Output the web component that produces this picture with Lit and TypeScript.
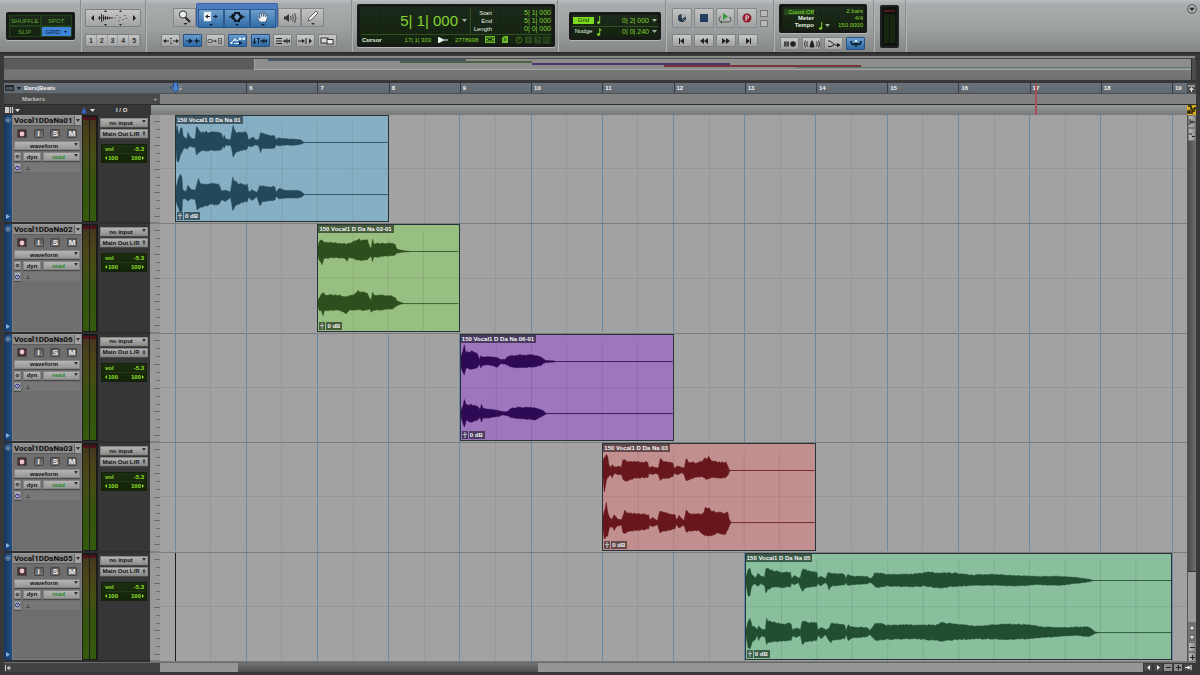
import { LitElement, html, svg, css, nothing } from "lit";
import { customElement, property } from "lit/decorators.js";
import { styleMap } from "lit/directives/style-map.js";

const FIRST_BAR = 5;
const VISIBLE_BARS = 14.21;
const pct = (bar: number) => `${((bar - FIRST_BAR) / VISIBLE_BARS) * 100}%`;

interface Clip {
  name: string;
  start: number;
  bars: number;
  fill: string;
  wave: string;
  tag: string;
  mini: string;
  channels: string[];
}

interface Track {
  name: string;
  clip: Clip;
}

// Envelopes are "x,up,down" triples; one bar is 213.6 units wide.
const TRACKS: Track[] = [
  {
    name: "Vocal1DDaNa01",
    clip: {
      name: "150 Vocal1 D Da Na 01", start: 5, bars: 3, fill: "#86afc3", wave: "#24485b", tag: "#3f5966", mini: "#45596b",
      channels: [
        "0,40,20 3,50,50 7,30,55 10,24,50 14,40,35 18,42,30 22,18,20 30,12,15 33,10,20 36,28,18 40,20,12 48,12,12 58,10,15 62,45,38 65,48,36 70,35,28 78,30,25 100,30,24 130,30,22 138,25,20 142,10,10 146,20,16 150,10,8 165,8,8 168,25,15 173,48,40 180,30,30 200,30,22 215,28,20 219,8,10 225,12,12 235,15,10 240,8,6 250,8,10 256,28,28 260,26,18 280,22,18 300,18,16 302,8,6 310,14,10 325,12,8 350,10,8 375,8,6 384,4,3 387,0,0",
        "0,20,20 8,50,40 13,55,55 18,50,50 20,15,15 30,8,12 36,25,20 45,15,12 58,12,15 64,35,45 68,48,42 75,30,40 100,32,30 130,30,28 138,10,15 150,12,20 165,8,8 172,48,48 180,36,30 210,28,22 216,28,20 220,8,8 230,14,18 245,6,6 254,25,35 260,24,22 300,22,16 303,6,5 312,18,12 330,12,10 370,12,10 380,8,7 386,3,3 390,0,0",
      ],
    },
  },
  {
    name: "Vocal1DDaNa02",
    clip: {
      name: "150 Vocal1 D Da Na 02-01", start: 7, bars: 2, fill: "#98bf82", wave: "#2d4f1d", tag: "#475c3d", mini: "#4c6440",
      channels: [
        "0,15,15 4,30,25 8,35,30 12,35,40 18,27,20 40,26,18 80,24,20 88,22,28 95,24,18 108,28,20 118,34,24 125,37,24 130,32,25 150,32,24 158,14,16 162,10,14 166,35,28 170,24,16 180,24,16 225,24,12 235,20,10 238,10,5 245,6,4 255,3,2 272,1,1 280,0,0",
        "0,8,8 4,18,20 10,26,20 16,30,36 20,26,20 60,24,20 86,20,28 95,22,20 110,28,18 122,36,18 140,35,20 150,28,18 158,14,16 162,12,25 166,32,20 174,24,20 225,22,16 236,18,10 240,8,6 250,4,2 262,0,0",
      ],
    },
  },
  {
    name: "Vocal1DDaNa06",
    clip: {
      name: "150 Vocal1 D Da Na 06-01", start: 9, bars: 3, fill: "#9d76bd", wave: "#2e0a54", tag: "#4c3b60", mini: "#4b3470",
      channels: [
        "0,15,15 6,30,30 10,45,40 14,28,22 20,28,20 35,30,22 50,22,18 56,6,8 60,18,20 64,14,12 80,14,10 110,12,16 120,6,6 135,6,8 140,14,10 150,16,16 180,19,18 220,18,16 240,14,12 250,8,6 256,3,3 280,2,2 285,0,0",
        "0,10,10 6,22,26 10,38,40 16,24,20 30,26,24 50,22,20 58,12,12 62,26,26 66,16,14 90,12,12 115,8,8 125,5,4 140,6,6 152,16,12 175,18,14 200,18,16 225,16,18 240,12,10 250,8,6 256,2,2 260,0,0",
      ],
    },
  },
  {
    name: "Vocal1DDaNa03",
    clip: {
      name: "150 Vocal1 D Da Na 03", start: 11, bars: 3, fill: "#c18f8f", wave: "#67161b", tag: "#664a4b", mini: "#78353a",
      channels: [
        "0,30,20 4,40,60 10,44,30 14,40,20 18,15,18 24,10,12 28,18,22 34,10,8 45,12,12 56,10,12 60,34,26 66,32,32 74,26,30 100,26,22 136,24,20 139,8,8 150,12,12 160,8,8 168,8,12 174,36,30 180,28,24 200,24,22 212,20,18 216,6,8 225,14,12 240,8,6 246,8,14 252,34,30 258,26,28 280,22,20 300,26,18 306,36,22 312,34,25 320,40,24 328,28,20 350,24,22 372,24,20 378,12,14 384,0,0",
        "0,20,20 4,34,46 10,55,40 14,30,40 20,14,14 28,10,12 34,24,22 44,10,10 56,8,8 60,20,30 66,36,34 74,28,26 100,26,24 138,22,18 141,8,8 150,14,12 165,6,6 172,32,30 178,30,28 210,24,20 218,22,18 222,8,6 230,20,16 245,6,8 252,36,28 260,26,24 290,26,24 304,26,34 310,46,40 320,40,38 335,32,36 345,30,30 372,28,34 378,28,20 382,10,10 388,0,0",
      ],
    },
  },
  {
    name: "Vocal1DDaNa05",
    clip: {
      name: "150 Vocal1 D Da Na 05", start: 13, bars: 6, fill: "#89bf9d", wave: "#214d31", tag: "#3b5c48", mini: "#56806a",
      channels: [
        "0,10,10 6,30,40 12,38,46 16,18,20 22,14,12 28,8,10 36,20,18 45,12,8 56,10,16 60,38,38 66,36,26 80,28,20 110,24,20 134,24,18 137,6,8 146,14,12 158,8,6 164,10,20 170,34,32 176,32,22 200,26,18 214,24,16 216,6,8 224,12,16 240,6,6 246,20,14 250,24,28 256,20,16 290,20,14 298,16,12 301,5,5 306,18,14 320,12,12 350,12,10 366,12,10 372,6,6 380,8,8 388,22,18 400,22,20 420,18,16 500,18,18 540,24,16 580,22,22 620,22,18 680,16,14 760,18,14 820,14,16 880,12,12 950,12,14 980,10,10 1020,6,6 1038,3,3 1046,0,0",
        "0,8,8 6,30,40 12,44,48 18,20,30 28,16,20 34,8,8 38,20,22 48,10,8 58,8,16 62,40,36 68,34,28 90,28,26 136,26,22 140,8,10 152,14,14 164,8,8 170,36,36 178,30,28 213,28,22 217,8,8 226,16,18 240,8,6 250,12,24 256,26,28 262,28,22 298,22,18 301,5,5 308,22,22 320,16,16 366,14,12 372,6,6 380,14,12 388,26,22 400,28,22 420,22,20 500,22,18 570,22,22 590,28,24 640,24,20 700,18,18 780,26,20 860,22,18 900,16,14 960,14,10 1000,16,8 1030,16,12 1042,10,8 1050,3,3 1062,0,0",
      ],
    },
  },
];

// Small deterministic ripple so that the envelopes look like audio.
const ripple = (n: number) => {
  const v = Math.sin(n * 12.9898) * 43758.5453;
  return 0.95 + (v - Math.floor(v)) * 0.18;
};

function wavePath(env: string, mid: number): string {
  const pts = env.split(" ").map((p) => p.split(",").map(Number));
  const top: string[] = [];
  const low: string[] = [];
  for (let i = 0; i < pts.length - 1; i++) {
    const [x0, u0, d0] = pts[i];
    const [x1, u1, d1] = pts[i + 1];
    const steps = Math.max(1, Math.round((x1 - x0) / 4));
    for (let s = 0; s < steps; s++) {
      const t = s / steps;
      const x = x0 + (x1 - x0) * t;
      top.push(`${x.toFixed(1)} ${(mid - (u0 + (u1 - u0) * t) * ripple(x)).toFixed(1)}`);
      low.unshift(`${x.toFixed(1)} ${(mid + (d0 + (d1 - d0) * t) * ripple(x + 7)).toFixed(1)}`);
    }
  }
  const end = pts[pts.length - 1][0];
  return `M${top.join("L")}L${end} ${mid}L${low.join("L")}Z`;
}

const controls = css`
  * { box-sizing: border-box; }
  button, select {
    appearance: none;
    margin: 0;
    padding: 0;
    border: 0;
    border-radius: 0;
    font: inherit;
    color: inherit;
    background: none;
    line-height: 1;
  }
  svg { display: block; }
`;

@customElement("audio-clip")
class AudioClip extends LitElement {
  @property({ attribute: false }) clip!: Clip;

  static styles = [controls, css`
    :host { display: block; font: bold 6px/8px "Liberation Sans", Arial, sans-serif; color: #f4f4f4; }
    .box { position: relative; height: 100%; border: 1px solid #26343a; display: flex; flex-direction: column; justify-content: space-between; align-items: flex-start; }
    .wave { position: absolute; inset: 0; width: 100%; height: 100%; }
    .title, .gain span { position: relative; padding: 0 2px 0 1px; white-space: nowrap; }
    .gain { position: relative; display: flex; gap: 1px; padding: 0 0 1px 1px; }
    .gain .fader { padding: 1px; }
  `];

  render() {
    const c = this.clip;
    const w = c.bars * 213.6;
    const lines = Array.from({ length: c.bars * 2 - 1 }, (_, i) => (i + 1) * 106.8);
    const tag = styleMap({ background: c.tag });
    return html`
      <div class="box" style=${styleMap({ background: c.fill })}>
        <svg class="wave" viewBox="0 0 ${w} 322" preserveAspectRatio="none" aria-hidden="true">
          ${lines.map((x) => svg`<path d="M${x} 20V322" stroke="#000" stroke-opacity=".09" stroke-width="3"/>`)}
          <path d="M0 161H${w}" stroke="#000" stroke-opacity=".08" stroke-width="3" />
          ${[81, 240].map((mid, i) => svg`
            <path d="M0 ${mid}H${w}" stroke=${c.wave} stroke-width="3" stroke-opacity=".85"/>
            <path d=${wavePath(c.channels[i], mid)} fill=${c.wave} stroke=${c.wave} stroke-width="1.500"/>`)}
        </svg>
        <span class="title" style=${tag}>${c.name}</span>
        <div class="gain">
          <span class="fader" style=${tag}><svg width="4" height="6" viewBox="0 0 4 6"><path d="M2 0V6M0 2.5H4" stroke="#b8c0c0" stroke-width="1" fill="none" /></svg></span>
          <span style=${tag}>0 dB</span>
        </div>
      </div>`;
  }
}

@customElement("track-head")
class TrackHead extends LitElement {
  @property() name = "";

  static styles = [controls, css`
    :host { display: grid; grid-template-columns: 8px 70px 16px 52px; font: bold 6px/8px "Liberation Sans", Arial, sans-serif; color: #111; background: #2e2e2e; padding-bottom: 2px; }
    .color { background: linear-gradient(90deg, #16365e, #214d84); display: flex; flex-direction: column; justify-content: space-between; align-items: center; padding: 2px 0 3px; }
    .strip { background: #6e6e6e; border: 1px solid #7c7c7c; border-top-color: #999; display: flex; flex-direction: column; gap: 2px; }
    .title { display: flex; height: 10px; background: #8c8c8c; color: #0c0c0c; border-bottom: 1px solid #5c5c5c; }
    .title button:first-child { flex: 1; text-align: left; padding-left: 1px; font: bold 8px/9px Roboto, sans-serif; }
    .title button:last-child { width: 7px; border-left: 1px solid #666; display: flex; justify-content: center; padding-top: 3px; background: #a0a0a0; }
    .keys { display: flex; justify-content: space-between; padding: 1px 4px 1px; }
    .keys button { width: 10px; height: 9px; background: linear-gradient(#5a5a5a, #757575); border: 1px solid #484848; color: #eee; font-size: 8px; line-height: 7px; border-radius: 1px; display: flex; justify-content: center; align-items: center; }
    .keys .rec { background: #4a3033; }
    .row { display: flex; gap: 2px; padding: 0 1px; height: 9px; }
    .pill { background: linear-gradient(#b5b5b5, #979797); border: 1px solid #858585; box-shadow: 0 1px 0 #4a4a4a; display: flex; align-items: center; justify-content: center; }
    .drop { position: relative; flex: 1; display: flex; height: 9px; }
    .drop select { flex: 1; min-width: 0; text-align: center; text-align-last: center; padding-right: 6px; background: linear-gradient(#b5b5b5, #979797); border: 1px solid #858585; box-shadow: 0 1px 0 #4a4a4a; }
    .drop svg { position: absolute; right: 2px; top: 2px; pointer-events: none; }
    .read select { color: #228a2c; }
    .small { width: 7px; }
    .dyn { width: 18px; }
    .slot { flex: 1; background: #787878; border: 1px solid #747474; padding: 2px 2px; }
    .meter { background: #1b1b1b; display: flex; gap: 1px; padding: 2px 2px 1px 1px; }
    .bar { flex: 1; border-top: 3px solid #4e1218; background: linear-gradient(#45371f, #4b4418 18%, #454f14 40%, #36540e 60%, #345a0c); }
    .io { background: #363636; padding: 3px 2px 0 2px; display: flex; flex-direction: column; gap: 2px; }
    .io .drop { flex: none; }
    .io .drop select { background: linear-gradient(#b4b4b4, #8e8e8e); }
    .vol { margin: 4px 1px 0; background: linear-gradient(#1c2c10, #142409); border: 1px solid #17200f; color: #8fe028; line-height: 8px; padding: 0 2px 0 3px; }
    .vol div { display: flex; justify-content: space-between; }
    .vol .pan { border-top: 1px solid #253818; }
    .vol .pan span { display: flex; align-items: center; gap: 1px; }
  `];

  private drop(label: string, value: string, cls = "", glyph: unknown = svg`<path d="M0 0H4L2 3Z" fill="#333"/>`) {
    return html`<label class="drop ${cls}"><select aria-label=${label}><option>${value}</option></select>
      <svg width="4" height="5" viewBox="0 0 4 5">${glyph}</svg></label>`;
  }

  render() {
    return html`
      <div class="color">
        <svg width="6" height="6" viewBox="0 0 6 6"><circle cx="3" cy="3" r="2.5" fill="#31567f" stroke="#6f8bad" stroke-width=".7" /><path d="M1.6 2.4H4.4L3 4.4Z" fill="#a8bbd2" /></svg>
        <svg width="4" height="5" viewBox="0 0 4 5"><path d="M0 0L4 2.5L0 5Z" fill="#7db0e6" /></svg>
      </div>
      <div class="strip">
        <div class="title">
          <button>${this.name}</button>
          <button aria-label="Track options"><svg width="4" height="3" viewBox="0 0 4 3"><path d="M0 0H4L2 3Z" fill="#333" /></svg></button>
        </div>
        <div class="keys">
          <button class="rec" aria-label="Record enable"><svg width="6" height="6" viewBox="0 0 6 6"><circle cx="3" cy="3" r="2.4" fill="#e9c9cb" /></svg></button>
          <button>I</button><button>S</button><button>M</button>
        </div>
        <div class="row">${this.drop("Track view", "waveform")}</div>
        <div class="row">
          <button class="pill small" aria-label="Freeze"><svg width="5" height="5" viewBox="0 0 5 5"><circle cx="2.5" cy="2.5" r="1.8" fill="#333" /><path d="M2.5 0V5M0 2.5H5" stroke="#777" stroke-width=".6" /></svg></button>
          <button class="pill dyn">dyn</button>
          ${this.drop("Automation mode", "read", "read")}
        </div>
        <div class="row">
          <button class="pill small" aria-label="Timebase"><svg width="6" height="6" viewBox="0 0 6 6"><circle cx="3" cy="3" r="2.3" fill="#dde" stroke="#1c1c78" stroke-width="1.2" /><path d="M3 1.6V3.2H4" stroke="#1c1c78" stroke-width=".8" fill="none" /></svg></button>
          <div class="slot"><svg width="4" height="4" viewBox="0 0 4 4"><path d="M2 0V3M0 3.5H4" stroke="#444" stroke-width=".9" /></svg></div>
        </div>
      </div>
      <div class="meter"><div class="bar"></div><div class="bar"></div></div>
      <div class="io">
        ${this.drop("Input", "no input")}
        ${this.drop("Output", "Main Out L/R", "", svg`<path d="M2 0V5M.5 1.2H3.5M.5 2.8H3.5" stroke="#333" stroke-width=".8"/>`)}
        <div class="vol">
          <div><span>vol</span><span>-5.3</span></div>
          <div class="pan">
            <span><svg width="2" height="4" viewBox="0 0 2 4"><path d="M2 0V4L0 2Z" fill="#8fe028" /></svg>100</span>
            <span>100<svg width="2" height="4" viewBox="0 0 2 4"><path d="M0 0V4L2 2Z" fill="#8fe028" /></svg></span>
          </div>
        </div>
      </div>`;
  }
}

const K = "#222";
const W = "#e8eef2";
const caret = (fill: string) => html`<svg class="caret" width="5" height="3" viewBox="0 0 5 3"><path d="M0 0H5L2.5 3Z" fill=${fill} /></svg>`;
const ico = (w: number, h: number, body: unknown) =>
  html`<svg width=${w} height=${h} viewBox="0 0 ${w} ${h}" fill="none" aria-hidden="true">${body}</svg>`;

const EDIT_TOOLS: [string, boolean, unknown][] = [
  ["Link timeline and edit selection", false, ico(16, 8, svg`<path d="M1 4H6M10 4H15" stroke="#222"/><path d="M0 4L3 2V6ZM16 4L13 2V6Z" fill="#222"/><circle cx="8" cy="1.500" r=".8" fill="#222"/><circle cx="8" cy="4" r=".6" fill="#222"/><circle cx="8" cy="6.500" r=".8" fill="#222"/>`)],
  ["Tab to transients", true, ico(16, 8, svg`<path d="M1 4H6M9 4H15M11.500 1.500V6.500" stroke="#0b1c30"/><path d="M4 1.500L8 4L4 6.500ZM13 2.500L11 4L13 5.500Z" fill="#0b1c30"/>`)],
  ["Mirrored MIDI editing", false, ico(16, 8, svg`<rect x="1" y="2.500" width="4" height="3" rx="1" stroke="#555"/><path d="M5 4H9" stroke="#444"/><path d="M8 2.500L10 4L8 5.500Z" fill="#444"/><path d="M11.500 1V7M14.500 1V7M11 1.500H15M11 4H15M11 6.500H15" stroke="#555" stroke-width=".8"/>`)],
  ["Automation follows edit", true, ico(16, 8, svg`<path d="M1 6L4 3L7 4L10 2L15 2M4 6.500H10" stroke="#dbe9f7"/><circle cx="1.500" cy="6" r="1.100" fill="#fff"/><circle cx="5" cy="2.500" r="1.100" fill="#fff"/><circle cx="10" cy="1.700" r="1.100" fill="#fff"/><circle cx="14" cy="1.700" r="1.100" fill="#fff"/><path d="M9 4L12.500 6L9 8Z" fill="#0b1c30"/>`)],
  ["Timeline insertion follows playback", true, ico(16, 8, svg`<path d="M2.500 1V6M6.500 1V7M8 4H15M12 1.500V6.500" stroke="#0b1c30"/><path d="M.5 4.500L2.500 7.500L4.500 4.500ZM5 1H8V2H5ZM10 2L12 4L10 6ZM15 2L13 4L15 6Z" fill="#0b1c30"/>`)],
  ["Edit selection", false, ico(16, 8, svg`<path d="M1 1.500H7M1 4H7M1 6.500H7M8 4H15M12 1.500V6.500" stroke="#222"/><path d="M9.500 2L11.500 4L9.500 6ZM15 2L13 4L15 6Z" fill="#222"/>`)],
  ["Insertion playback", false, ico(16, 8, svg`<path d="M1 4H6M9 1V7" stroke="#222"/><path d="M5 2L8 4L5 6ZM12 1.500L15 4L12 6.500Z" fill="#222"/>`)],
  ["Layered editing", false, ico(16, 8, svg`<rect x="2" y="1" width="7" height="5" fill="#ddd" stroke="#222" stroke-width=".9"/><rect x="8" y="2.500" width="6" height="4.500" fill="#f0f0f0" stroke="#222" stroke-width=".9"/>`)],
];

@customElement("app-root")
class AppRoot extends LitElement {
  static styles = [controls, css`
    :host { display: block; font: bold 6px/8px "Liberation Sans", Arial, sans-serif; color: #111; }
    .app { height: 100vh; min-height: 480px; display: flex; flex-direction: column; background: #383838; overflow: hidden; }

    .toolbar { flex: none; height: 54px; display: flex; background: linear-gradient(#bcc0c2, #a9acad 8%, #9fa2a3 50%, #858787); border-bottom: 2px solid #2d2d2d; }
    .group { display: flex; flex-direction: column; border-right: 1px solid #8a8d8e; box-shadow: 1px 0 0 #b0b3b4; }
    .modes-group { padding: 12px 5px 0 6px; width: 81px; }
    .zoom-group { padding: 9px 4px 0; width: 65px; gap: 7px; }
    .tools-group { padding: 3px 14px 0 15px; width: 206px; gap: 7px; }
    .counter-group { padding: 4px 2px 0 5px; width: 206px; }
    .grid-group { padding: 12px 4px 0 11px; width: 108px; }
    .transport-group { padding: 8px 5px 0 6px; width: 108px; gap: 6px; }
    .tempo-group { padding: 4px 6px 0 5px; width: 100px; gap: 4px; }
    .meter-group { padding: 5px 6px 0 6px; width: 32px; }
    .end { flex: 1; display: flex; justify-content: flex-end; padding: 4px 3px; }
    .end button { width: 10px; height: 10px; }

    .lcd { background: repeating-linear-gradient(90deg, #00000026 0 1px, transparent 1px 3px), linear-gradient(#1d2c1c, #152310); border: 3px solid #161916; border-radius: 2px; color: #84d42c; font-weight: normal; box-shadow: 0 1px 0 #b4b6b7; }
    .modes { display: grid; grid-template-columns: 1fr 1fr; height: 28px; }
    .modes button { color: #62a834; border: 1px solid #22401a; text-align: center; }
    .modes .on { background: #3f83d6; color: #0d2238; position: relative; display: flex; align-items: center; justify-content: center; gap: 4px; }

    .keyrow { display: flex; border: 1px solid #7d7f80; border-radius: 1px; background: linear-gradient(#c4c5c5, #a2a3a4); }
    .keyrow button { flex: 1; display: flex; align-items: center; justify-content: center; }
    .zooms { height: 18px; }
    .presets { height: 13px; }
    .presets button { border-right: 1px solid #999; font-size: 7px; color: #333; }

    .tools { display: flex; align-items: flex-end; height: 24px; padding-left: 12px; }
    .tool { width: 23px; height: 19px; display: flex; align-items: center; justify-content: center; border: 1px solid #85878a; background: linear-gradient(#c2c3c3, #a0a1a2); }
    .smart { display: flex; padding: 5px 1px 0; background: #4d7dc0; border: 1px solid #3c63a0; border-bottom: 0; border-radius: 2px 2px 0 0; height: 24px; }
    .smart .tool { width: 26px; height: 19px; border-color: #2d5a8e; background: linear-gradient(#6f9fce, #2f6ca6); }
    .edits { display: flex; justify-content: space-between; }
    .key { width: 19px; height: 13px; display: flex; align-items: center; justify-content: center; border: 1px solid #7f8183; border-radius: 1px; background: linear-gradient(#c8c9c9, #9fa1a1); }
    .blue { background: linear-gradient(#6a9ccc, #2d68a2); border-color: #285283; }

    .counter { height: 43px; display: flex; flex-direction: column; padding: 0 1px; }
    .counter .main { display: flex; height: 28px; border-bottom: 1px solid #31521f; }
    .big { flex: 1; display: flex; align-items: center; justify-content: flex-end; gap: 4px; font-size: 15px; border-right: 1px solid #31521f; padding-right: 3px; line-height: 20px; }
    .marks { width: 80px; display: flex; flex-direction: column; justify-content: center; font-size: 7px; }
    .marks div { display: flex; justify-content: space-between; height: 8px; }
    .marks b, .status b, .settings b { color: #e6efe2; font-weight: normal; font-size: 6px; }
    .marks b { width: 21px; text-align: right; }
    .status { flex: 1; display: flex; align-items: center; justify-content: space-between; padding-left: 1px; }
    .status b { font-weight: bold; margin-right: 16px; }
    .dim { opacity: .55; }

    .grids { height: 28px; display: flex; flex-direction: column; }
    .grids .line { flex: 1; display: flex; align-items: center; gap: 3px; border-bottom: 1px solid #31521f; padding: 0 1px; }
    .grids .line:last-child { border-bottom: 0; }
    .grids .name { width: 21px; height: 7px; line-height: 7px; text-align: center; color: #e6efe2; }
    .grids .lit { background: #7edc20; color: #10280a; }
    .grids select { flex: 1; text-align: right; text-align-last: right; font-size: 7px; height: 9px; min-width: 0; }

    .transport { display: flex; gap: 2px; }
    .transport .tool { width: 20px; height: 20px; border-radius: 1px; }
    .transport .key { width: 20px; }
    .stack { display: flex; flex-direction: column; justify-content: space-around; margin-left: 1px; }
    .stack button { width: 8px; height: 7px; border: 1px solid #777; background: #b6b7b7; }

    .settings { height: 29px; display: flex; flex-direction: column; justify-content: center; padding: 0 1px 0 2px; }
    .settings div { display: flex; align-items: center; height: 7px; line-height: 7px; }
    .settings div > :first-child { width: 30px; text-align: right; }
    .settings .off { background: #24481a; color: #8fe030; text-align: center; }
    .settings .value { margin-left: auto; }
    .settings b { font-weight: bold; }
    .tempo-group .edits { padding: 0 2px 0 1px; }
    .output { height: 43px; background: #0f130f; border: 2px solid #202220; border-radius: 2px; padding: 3px 2px; display: flex; flex-direction: column; gap: 2px; }
    .output i { height: 2px; background: #50161a; }
    .output em { flex: 1; background: linear-gradient(90deg, #16260f 45%, #0f130f 45% 55%, #16260f 55%); }

    .overview { flex: none; margin: 2px 4px 3px; display: flex; flex-direction: column; }
    .rail { height: 3px; background: #898989; border-bottom: 1px solid #4a4a4a; margin-right: 1px; }
    .universe { display: flex; height: 21px; background: linear-gradient(#7c7c7c, #727272); }
    .before { width: 250px; height: 11px; background: #5b5b5b; border-bottom: 1px solid #6b6b6b; }
    .window { position: relative; flex: 1; height: 11px; background: #8d8d8d; border: solid #a4a4a4; border-width: 0 0 1px 1px; }
    .mini { position: absolute; height: 2px; }
    .mini:last-child { height: 1px; }
    .grip { width: 5px; background: #4b4b4b; border-left: 1px solid #2c2c2c; }

    .cols { display: grid; grid-template-columns: 156px 15px 1fr 9px; }
    .rulers { flex: none; position: relative; margin: 0 4px; }
    .ruler { height: 11px; background: linear-gradient(#69727a, #606870); color: #f3f3f3; border-bottom: 1px solid #4c5155; }
    .ruler .label, .markers .label, .lists .label { display: flex; align-items: center; gap: 3px; }
    .ruler .label { padding-left: 1px; }
    .scale { position: relative; grid-column: 3; }
    .tick { position: absolute; top: 0; bottom: 0; padding-left: 2px; border-left: 1px solid #363c42; line-height: 10px; }
    .tail { background: #4a4a4a; display: flex; justify-content: center; align-items: center; }
    .markers { height: 10px; background: #828282; }
    .markers .label { background: #4a4a4a; color: #bdbdbd; padding: 0 3px 0 18px; justify-content: space-between; }
    .lists { height: 11px; border-top: 1px solid #2c2c2c; color: #e0e0e0; }
    .lists .label { background: #363636; padding-left: 1px; gap: 1px; margin-right: 9px; }
    .lists .io { margin-left: 20px; }
    .lists .fill { margin-left: -9px; grid-column: 2 / 4; background: linear-gradient(#969a98, #777a78); }
    .lists .label .metro { margin-left: 60px; display: flex; gap: 3px; align-items: center; }
    .start { position: absolute; left: -5px; top: -1px; }
    .playhead { position: absolute; top: 0; bottom: 0; width: 2px; background: #a8505c; }
    .over { position: absolute; inset: 0; pointer-events: none; }

    .body { flex: 1; min-height: 0; display: grid; grid-template-columns: 1fr 9px; padding: 0 4px; }
    .tracks { display: grid; grid-auto-rows: 1fr; min-height: 0; }
    .track { display: grid; grid-template-columns: 146px 10px 1fr; min-height: 0; }
    .amp { width: 100%; height: 100%; background: #9a9a9a; border-bottom: 2px solid #7e7e7e; }
    .lane { position: relative; padding-left: 15px; background: #a2a2a2; border-bottom: 1px solid #7c7c7c; overflow: hidden; min-height: 0; }
    .canvas { position: relative; height: 100%; }
    .grid { position: absolute; inset: 0; width: 100%; height: 100%; }
    .mid { position: absolute; left: 0; right: 0; top: 49%; height: 1px; background: #969696; }
    .clip { position: absolute; top: 0; bottom: 1px; }
    .cursor { position: absolute; left: 0; top: 0; bottom: 0; width: 1px; background: #1c1c1c; }

    .vbar { display: flex; flex-direction: column; background: #9a9a9a; border-left: 1px solid #555; }
    .sb { display: flex; align-items: center; justify-content: center; background: linear-gradient(90deg, #bbb, #8d8d8d); border: 1px solid #777; flex: none; }
    .vbar .sb { height: 10px; }
    .vbar .tall { height: 13px; }
    .vbar .dark { background: #6c6c6c; }
    .vthumb { flex: 432; background: linear-gradient(90deg, #4c4c4c, #6f6f6f); border-bottom: 1px solid #333; }
    .vrest { flex: 50; }
    .foot { flex: none; display: flex; height: 10px; margin: 0 4px 3px; padding-right: 3px; background: linear-gradient(90deg, #969696 90%, #383838 99%); border-top: 1px solid #6a6a6a; }
    .foot .left { width: 156px; background: #434343; display: flex; align-items: center; padding-left: 1px; }
    .foot .gap { flex: 78; }
    .foot .thumb { flex: 299; background: linear-gradient(#737373, #4f4f4f); border-radius: 1px; }
    .foot .rest { flex: 603; background: #969696; }
    .foot .gap { background: #969696; }
    .foot .sb { width: 10px; background: #484848; border-color: #3a3a3a; }
    .foot .lite { background: #8c8c8c; }
  `];

  private tool(label: string, body: unknown) {
    return html`<button class="tool" aria-label=${label}>${body}</button>`;
  }

  private key(label: string, body: unknown, cls = "") {
    return html`<button class="key ${cls}" aria-label=${label}>${body}</button>`;
  }

  private toolbar() {
    return html`
      <header class="toolbar">
        <div class="group modes-group">
          <div class="lcd modes">
            <button>SHUFFLE</button><button>SPOT</button><button>SLIP</button>
            <button class="on">GRID <svg width="3" height="2" viewBox="0 0 3 2"><path d="M0 0H3L1.500 2Z" fill="#0d2238" /></svg></button>
          </div>
        </div>
        <div class="group zoom-group">
          <div class="keyrow zooms">
            <button aria-label="Zoom out">${ico(3, 6, svg`<path d="M3 0V6L0 3Z" fill="#1c1c1c"/>`)}</button>
            <button aria-label="Audio zoom">${ico(15, 16, svg`<path d="M6 2L7.500 0L9 2ZM6 14L7.500 16L9 14Z" fill="#222"/><path d="M0 8H15M1.500 6V10M3.500 4V12M5.500 5V11M7.500 6V10M9.500 6.500V9.500M11.500 7V9" stroke="#3b3030" stroke-width="1"/>`)}</button>
            <button aria-label="MIDI zoom">${ico(15, 16, svg`<path d="M6 2L7.500 0L9 2ZM6 14L7.500 16L9 14Z" fill="#333"/><path d="M1 8H3M3 5.500H5M6 7.500H8M9 9.500H11M11 5.500H13M5 11H7M12 8.500H14" stroke="#777"/>`)}</button>
            <button aria-label="Zoom in">${ico(3, 6, svg`<path d="M0 0V6L3 3Z" fill="#1c1c1c"/>`)}</button>
          </div>
          <div class="keyrow presets">${[1, 2, 3, 4, 5].map((n) => html`<button>${n}</button>`)}</div>
        </div>
        <div class="group tools-group">
          <div class="tools">
            ${this.tool("Zoomer", ico(14, 15, svg`<circle cx="5" cy="4.500" r="3.600" fill="#e9eef0" stroke="#333"/><path d="M7.500 7.500L12 12" stroke="#222" stroke-width="2"/><path d="M5.500 13H9.500L7.500 15Z" fill="#222"/>`))}
            <div class="smart">
              ${this.tool("Trim", ico(16, 15, svg`<rect x="1" y="1" width="7" height="9" fill="#eef2f5" stroke="#d6dde2" stroke-width=".5"/><path d="M7 5.500H3M10 5.500H14" stroke="#1a2a3c" stroke-width="1"/><path d="M5 3.500L2 5.500L5 7.500ZM12 3.500L15 5.500L12 7.500Z" fill="#1a2a3c"/><path d="M6 13H10L8 15Z" fill="#10243c"/>`))}
              ${this.tool("Selector", ico(16, 15, svg`<rect x="5" y="1" width="6" height="10" fill="#0e1720"/><path d="M0 5.500H2L3 3L4 2.500L5 4V8L4 9L3 8L2 6.500H0ZM16 5.500H14L13 4L12 3L11 4V8L12 9L13 7.500L14 6.500H16Z" fill="#0e1720"/><path d="M5 6L6 5L7 3L8 2.500L9 3.500L11 6L9 8L8 9.500L7 8.500L6 7Z" fill="#6d9fd2"/><path d="M6 13H10L8 15Z" fill="#10243c"/>`))}
              ${this.tool("Grabber", ico(14, 15, svg`<path d="M4 11L1.500 7L2.500 6L4 7.500L3.500 2.500L4.700 2L5.700 5.500L6 1H7.200L7.700 5.500L8.800 1.500L10 2L9.600 6L11 3.800L12 4.500L10.500 9L9.500 11Z" fill="#f2f5f7" stroke="#28405c" stroke-width=".6"/><path d="M5 13H9L7 15Z" fill="#10243c"/>`))}
            </div>
            ${this.tool("Scrubber", ico(14, 12, svg`<path d="M1 4.500H3L6 2V10L3 7.500H1Z" fill="#333"/><path d="M7.500 4Q8.800 6 7.500 8M9.500 2.500Q11.500 6 9.500 9.500M11.500 1Q14.500 6 11.500 11" stroke="#444"/>`))}
            ${this.tool("Pencil", ico(12, 15, svg`<path d="M1 11L2 8L9 1L11 3L4 10Z" fill="#efefef" stroke="#444" stroke-width=".8"/><path d="M4 13H8L6 15Z" fill="#333"/>`))}
          </div>
          <div class="edits">${EDIT_TOOLS.map(([l, on, g]) => this.key(l, g, on ? "blue" : ""))}</div>
        </div>
        <div class="group counter-group">
          <div class="lcd counter">
            <div class="main">
              <div class="big"><span>5| 1| 000</span>${caret("#9fb59a")}</div>
              <div class="marks">
                <div><b>Start</b><span>5| 1| 000</span></div>
                <div><b>End</b><span>5| 1| 000</span></div>
                <div><b>Length</b><span>0| 0| 000</span></div>
              </div>
            </div>
            <div class="status">
              <b>Cursor</b><span>17| 1| 303</span>
              ${ico(10, 6, svg`<path d="M0 0H1L6 2.500H10V3.500H6L1 6H0Z" fill=${W}/>`)}
              <span>2778998</span>
              ${ico(10, 7, svg`<rect width="10" height="7" fill="#68b82a"/><path d="M1 2H9M1 5H9M3 3.500H7" stroke="#16280f"/>`)}
              ${ico(6, 7, svg`<path d="M2 0H6V7H0V2Z" fill="#68b82a"/><path d="M3 2V5" stroke="#16280f"/>`)}
              <svg class="dim" width="36" height="8" viewBox="0 0 36 8" fill="none"><circle cx="4" cy="4" r="3" stroke="#68b82a" /><path d="M4 2V4.500" stroke="#68b82a" /><path d="M10 .5H17V7.500H10ZM19 .5H26V7.500H19ZM28 .5H35V7.500H28Z" fill="#3d6a28" /><path d="M12 4H15M21 2.500H24V5.500M30 2V6M33 2V6" stroke="#152310" /></svg>
            </div>
          </div>
        </div>
        <div class="group grid-group">
          <div class="lcd grids">
            <div class="line"><button class="name lit">Grid</button>
              ${ico(4, 8, svg`<ellipse cx="1.500" cy="6.500" rx="1.500" ry="1.200" fill="#8fe030"/><path d="M2.700 0V6.500" stroke="#8fe030" stroke-width=".9"/>`)}
              <select aria-label="Grid value"><option>0| 2| 000</option></select>${caret("#9fb59a")}</div>
            <div class="line"><span class="name">Nudge</span>
              ${ico(5, 8, svg`<ellipse cx="1.500" cy="6.500" rx="1.500" ry="1.200" fill="#8fe030"/><path d="M2.700 6.500V.5L4.500 3" stroke="#8fe030" stroke-width=".9"/>`)}
              <select aria-label="Nudge value"><option>0| 0| 240</option></select>${caret("#9fb59a")}</div>
          </div>
        </div>
        <div class="group transport-group">
          <div class="transport">
            ${this.tool("Online", ico(10, 10, svg`<circle cx="5" cy="5" r="4" fill="#26384c"/><path d="M5 5V1A4 4 0 0 1 8.500 3.500ZM5 5L8 8" fill="#aeb4b8" stroke="#aeb4b8" stroke-width=".8"/>`))}
            ${this.tool("Stop", ico(8, 8, svg`<rect width="8" height="8" fill="#25405f"/>`))}
            ${this.tool("Play", ico(14, 11, svg`<path d="M3 4H2Q1 4 1 6Q1 9 3 9H11Q13 9 13 6Q13 4 11 4" stroke="#4b5a4b"/><path d="M5 0L10 3.500L5 7Z" fill="#2f9c37"/><path d="M4 7L2 9L4 11Z" fill="#4b5a4b"/>`))}
            ${this.tool("Record", ico(10, 10, svg`<circle cx="5" cy="5" r="4.500" fill="#8f1f2c"/><path d="M4 8V2.800H5.500Q6.800 2.800 6.800 4T5.500 5.200H4" stroke="#f3dfe1"/>`))}
            <div class="stack"><button aria-label="Pre-roll"></button><button aria-label="Post-roll"></button></div>
          </div>
          <div class="transport">
            ${this.key("Return to zero", ico(8, 6, svg`<path d="M1.500 0V6" stroke=${K}/><path d="M6 0V6L2 3Z" fill=${K}/>`))}
            ${this.key("Rewind", ico(8, 6, svg`<path d="M4 0V6L0 3ZM8 0V6L4 3Z" fill=${K}/>`))}
            ${this.key("Fast forward", ico(8, 6, svg`<path d="M0 0V6L4 3ZM4 0V6L8 3Z" fill=${K}/>`))}
            ${this.key("Go to end", ico(8, 6, svg`<path d="M6.500 0V6" stroke=${K}/><path d="M2 0V6L6 3Z" fill=${K}/>`))}
          </div>
        </div>
        <div class="group tempo-group">
          <div class="lcd settings">
            <div><button class="off">Count Off</button><span class="value">2 bars</span></div>
            <div><b>Meter</b><span class="value">4/4</span></div>
            <div><b>Tempo</b>&nbsp;&nbsp;&nbsp;${ico(4, 8, svg`<ellipse cx="1.500" cy="6.500" rx="1.500" ry="1.200" fill="#8fe030"/><path d="M2.700 0V6.500" stroke="#8fe030" stroke-width=".9"/>`)}&nbsp;${caret("#9fb59a")}<span class="value">150.0000</span></div>
          </div>
          <div class="edits">
            ${this.key("Wait for note", ico(12, 6, svg`<path d="M0 .5H5V5.500H0Z" fill="#444"/><path d="M2.500 .5V5.500" stroke="#777" stroke-width=".7"/><circle cx="9" cy="3" r="2.800" fill=${K}/>`))}
            ${this.key("Metronome", ico(16, 8, svg`<path d="M6 7L7.500 1H8.500L10 7Z" fill=${K} stroke=${K}/><path d="M3.500 1.500Q2 4 3.500 6.500M1.500 .5Q-.5 4 1.500 7.500M12.500 1.500Q14 4 12.500 6.500M14.500 .5Q16.500 4 14.500 7.500" stroke=${K} stroke-width=".9"/>`))}
            ${this.key("MIDI merge", ico(14, 8, svg`<path d="M1 1H3L8 5H13M1 6.500H4L7 5" stroke=${K}/><path d="M10 3L13.500 5L10 7.500Z" fill=${K}/>`))}
            ${this.key("Conductor", ico(12, 9, svg`<path d="M1 2Q1 6 4.500 5.500M11 2Q11 6 7.500 5.500" stroke="#0b1c30" stroke-width="1.600"/><path d="M3 4H9L7 6L6 9L5 6Z" fill="#0b1c30"/><circle cx="6" cy="2" r="1.300" fill="#cfe4fa"/>`), "blue")}
          </div>
        </div>
        <div class="group meter-group"><div class="output"><i></i><em></em></div></div>
        <div class="end"><button aria-label="Toolbar menu">${ico(10, 10, svg`<circle cx="5" cy="5" r="4.400" stroke="#555"/><path d="M2.500 3.800H7.500L5 7Z" fill="#222"/>`)}</button></div>
      </header>`;
  }

  private overview() {
    const span = 14.2;
    return html`
      <div class="overview">
        <div class="rail"></div>
        <div class="universe">
          <div class="before"></div>
          <div class="window">
            ${TRACKS.map(({ clip: c }, i) => html`<div class="mini" style=${styleMap({
              left: `${((c.start - 4.8) / span) * 100}%`,
              width: `${(Math.min(c.bars, FIRST_BAR + span - 0.2 - c.start) / span) * 100}%`,
              top: `${i * 2}px`,
              background: c.mini,
            })}></div>`)}
          </div>
          <div class="grip"></div>
        </div>
      </div>`;
  }

  private rulers() {
    const bars = Array.from({ length: 15 }, (_, i) => FIRST_BAR + i);
    return html`
      <div class="rulers">
        <div class="cols ruler">
          <div class="label">
            ${ico(9, 6, svg`<rect x=".5" y=".5" width="8" height="5" fill="#4d545a" stroke="#23282c"/><path d="M0 1.500H9" stroke="#23282c"/>`)}
            <svg width="4" height="3" viewBox="0 0 4 3"><path d="M0 0H4L2 3Z" fill="#16191c" /></svg>
            <span>Bars|Beats</span>
          </div>
          <div class="scale">
            ${bars.map((b) => html`<span class="tick" style=${styleMap({ left: pct(b) })}>${b}</span>`)}
            <svg class="start" width="11" height="11" viewBox="0 0 11 11"><path d="M3.500 .5H7.500V5H10.500L5.500 10.500L.5 5H3.500Z" fill="#4f83cc" stroke="#1f4276" stroke-width=".8" /></svg>
          </div>
          <div class="tail">${ico(7, 7, svg`<path d="M0 1H7M3.500 7V3" stroke="#ddd"/><path d="M1 5L3.500 2L6 5Z" fill="#ddd"/>`)}</div>
        </div>
        <div class="cols markers"><div class="label"><span>Markers</span><span>+</span></div></div>
        <div class="cols lists">
          <div class="label">
            ${ico(9, 6, svg`<rect width="9" height="6" fill="#c9c9c9"/><path d="M4.500 0V6M6.500 0V6M8.500 0V6" stroke="#555"/>`)}
            ${caret("#ddd")}
            <span class="metro">${ico(6, 7, svg`<path d="M3 0L5.500 5.500Q3 8 .5 5.500Z" fill="#3565b8"/>`)}${caret("#ddd")}</span>
            <span class="io">I / O</span>
          </div>
          <div class="fill"></div>
          <div class="tail">${ico(9, 10, svg`<rect width="9" height="10" fill="#d7ab1c"/><path d="M1 1H4V4H8V2M8 6H5V9M1 6H3V8H1Z" stroke="#231d08" stroke-width="1.500"/>`)}</div>
        </div>
        <div class="cols over"><div class="scale"><div class="playhead" style=${styleMap({ left: pct(17.08) })}></div></div></div>
      </div>`;
  }

  private gridLines() {
    const halves = Array.from({ length: 29 }, (_, i) => FIRST_BAR + i / 2);
    return svg`${halves.map((b) => {
      const whole = Number.isInteger(b);
      return svg`<line x1=${pct(b)} x2=${pct(b)} y1="0" y2="100%" stroke=${whole ? "#6a8aa3" : "#979797"} stroke-width="1" shape-rendering="crispEdges"/>`;
    })}`;
  }

  private ampScale() {
    return svg`${Array.from({ length: 13 }, (_, i) => {
      const y = `${6 + i * 7.4}%`;
      return svg`<line x1=${i % 3 === 0 ? 4 : 6} x2="10" y1=${y} y2=${y} stroke="#6c6c6c" stroke-width="1" shape-rendering="crispEdges"/>`;
    })}`;
  }

  render() {
    return html`
      <div class="app">
        ${this.toolbar()}
        ${this.overview()}
        ${this.rulers()}
        <main class="body">
          <div class="tracks">
            ${TRACKS.map((t, i) => html`
              <section class="track">
                <track-head .name=${t.name}></track-head>
                <svg class="amp" aria-hidden="true">${this.ampScale()}</svg>
                <div class="lane">
                  <div class="mid"></div>
                  <div class="canvas">
                    <svg class="grid" aria-hidden="true">${this.gridLines()}</svg>
                    ${i === TRACKS.length - 1 ? html`<div class="cursor"></div>` : nothing}
                    <audio-clip class="clip" .clip=${t.clip} style=${styleMap({
                      left: pct(t.clip.start),
                      width: `${(t.clip.bars / VISIBLE_BARS) * 100}%`,
                    })}></audio-clip>
                  </div>
                </div>
              </section>`)}
          </div>
          <div class="vbar">
            <button class="sb tall" aria-label="Zoom waveform">${ico(6, 6, svg`<path d="M1 0V6M1 3H6M3 1.500V4.500" stroke=${K}/>`)}</button>
            <button class="sb tall" aria-label="Zoom notes">${ico(6, 6, svg`<path d="M0 2H3M3 4.500H6" stroke=${K}/>`)}</button>
            <div class="vthumb"></div>
            <div class="vrest"></div>
            <button class="sb dark" aria-label="Scroll up">${ico(4, 3, svg`<path d="M0 3H4L2 0Z" fill="#eee"/>`)}</button>
            <button class="sb dark" aria-label="Scroll down">${ico(4, 3, svg`<path d="M0 0H4L2 3Z" fill="#eee"/>`)}</button>
            <button class="sb" aria-label="Shorter tracks">${ico(5, 5, svg`<path d="M0 2.500H5" stroke=${K}/>`)}</button>
            <button class="sb" aria-label="Taller tracks">${ico(5, 5, svg`<path d="M0 2.500H5M2.500 0V5" stroke=${K}/>`)}</button>
          </div>
        </main>
        <footer class="foot">
          <div class="left">${ico(7, 6, svg`<path d="M.5 0V6M2 3H6" stroke="#ccc"/><path d="M4.500 .5L2 3L4.500 5.500Z" fill="#ccc"/>`)}</div>
          <div class="gap"></div><div class="thumb"></div><div class="rest"></div>
          <button class="sb" aria-label="Scroll left">${ico(3, 5, svg`<path d="M3 0V5L0 2.500Z" fill="#eee"/>`)}</button>
          <button class="sb" aria-label="Scroll right">${ico(3, 5, svg`<path d="M0 0V5L3 2.500Z" fill="#eee"/>`)}</button>
          <button class="sb lite" aria-label="Zoom out">${ico(5, 5, svg`<path d="M0 2.500H5" stroke=${K}/>`)}</button>
          <button class="sb lite" aria-label="Zoom in">${ico(5, 5, svg`<path d="M0 2.500H5M2.500 0V5" stroke=${K}/>`)}</button>
          <button class="sb" aria-label="Open editor">${ico(7, 5, svg`<path d="M0 2.500H3M6 0V5" stroke="#eee"/><circle cx="3.500" cy="2.500" r="1.500" fill="#eee"/>`)}</button>
        </footer>
      </div>`;
  }
}
